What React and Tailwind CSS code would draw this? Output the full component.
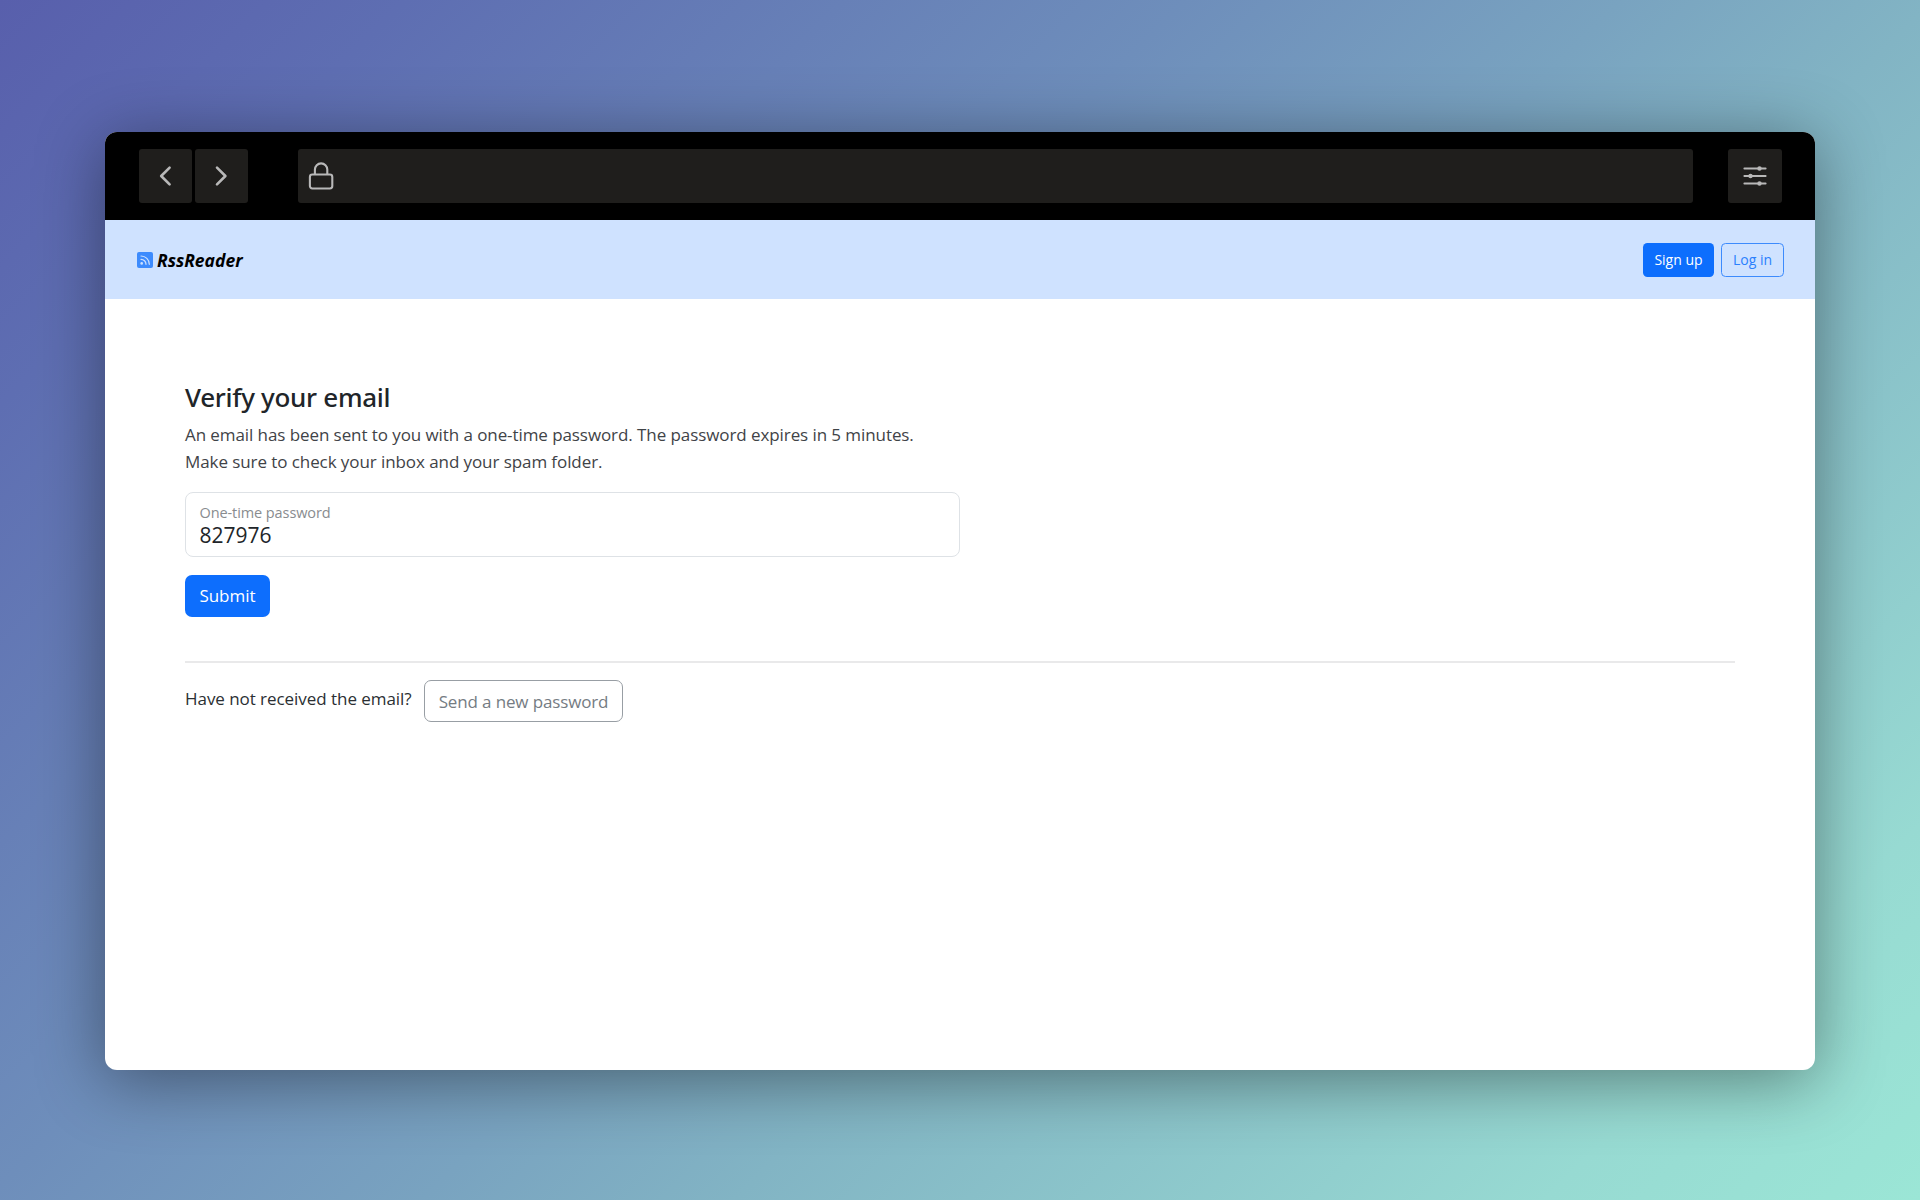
function ToolbarButton({ label, children }) {
  return (
    <button aria-label={label} className="flex h-[53.5px] w-[53.5px] items-center justify-center rounded-[3px] bg-[#1f1e1c] text-[#b8b8b8]">
      {children}
    </button>
  );
}

function Chevron({ d }) {
  return (
    <svg width="24" height="24" viewBox="0 0 24 24" fill="none" stroke="currentColor" strokeWidth="2.6" strokeLinecap="round" strokeLinejoin="round">
      <path d={d} />
    </svg>
  );
}

function LockIcon() {
  return (
    <svg width="26" height="28" viewBox="0 0 26 28" fill="none" stroke="#b8b8b8" strokeWidth="2.1">
      <rect x="1.9" y="12.5" width="22.4" height="14" rx="2.4" />
      <path d="M6.9 12.5V7.6a6.2 6.2 0 0 1 12.4 0v4.9" />
    </svg>
  );
}

function SlidersIcon() {
  return (
    <svg width="24" height="20" viewBox="0 0 24 20" fill="#b8b8b8" stroke="#b8b8b8" strokeWidth="2" strokeLinecap="round">
      <path d="M1.4 2.5h21.2M1.4 10h21.2M1.4 17.5h21.2" />
      <g stroke="none">
        <circle cx="16.5" cy="2.5" r="2.2" />
        <circle cx="7.5" cy="10" r="2.2" />
        <circle cx="16.5" cy="17.5" r="2.2" />
      </g>
    </svg>
  );
}

function RssIcon() {
  return (
    <svg width="16" height="16" viewBox="0 0 16 16" fill="none">
      <rect width="16" height="16" rx="2" fill="#3d8bfd" />
      <circle cx="4.7" cy="11.4" r="1.3" fill="#cfe2ff" />
      <path d="M4 7.3a5 5 0 0 1 5 5M4 4a8.3 8.3 0 0 1 8.3 8.3" stroke="#cfe2ff" strokeWidth="1.2" strokeLinecap="round" />
    </svg>
  );
}

function BrowserBar() {
  return (
    <div className="flex h-[88px] items-center bg-black px-[33.5px]">
      <div className="flex gap-[2.5px]">
        <ToolbarButton label="Back"><Chevron d="M16.6 3.6 8.2 12l8.4 8.4" /></ToolbarButton>
        <ToolbarButton label="Forward"><Chevron d="M8 3.6 16.4 12 8 20.4" /></ToolbarButton>
      </div>
      <div className="ml-[49.5px] mr-[35px] flex h-[53.5px] flex-1 items-center rounded-[3px] bg-[#1f1e1c] pl-[10.5px]">
        <LockIcon />
      </div>
      <ToolbarButton label="Settings"><SlidersIcon /></ToolbarButton>
    </div>
  );
}

function NavBar() {
  return (
    <header className="flex h-[79px] items-center justify-between bg-[#cfe2ff] pl-8 pr-[31px]">
      <a className="flex items-center gap-1">
        <RssIcon />
        <span className="text-[17.5px] font-bold italic leading-6 text-black">RssReader</span>
      </a>
      <div className="flex gap-[7px]">
        <button className="h-[34px] w-[71px] rounded-[4.5px] bg-[#0d6efd] text-[14px] text-white">Sign up</button>
        <button className="h-[34px] w-[63px] rounded-[4.5px] border border-[#3d8bfd] text-[14px] text-[#2b80fd]">Log in</button>
      </div>
    </header>
  );
}

export default function App() {
  return (
    <div className="flex h-[1200px] w-[1920px] flex-col items-center overflow-hidden bg-[linear-gradient(135deg,#585fac_0%,#5e6eb2_13%,#6e8ebb_38%,#79a3c0_52%,#82b4c4_62%,#97dad2_88%,#9be6d6_100%)] pt-[132px] font-['Open_Sans',sans-serif] text-[#212529]">
      <div className="flex h-[937.5px] w-[1710px] flex-col overflow-hidden rounded-[12px] bg-white shadow-[0_10px_68px_rgba(0,0,0,0.42)]">
        <BrowserBar />
        <NavBar />
        <main className="flex-1 px-20 pt-[82px]">
          <h1 className="font-['Noto_Sans',sans-serif] text-[26px] font-medium leading-8 tracking-[-0.3px]">Verify your email</h1>
          <p className="mt-[9px] text-[17px] leading-[26.7px] tracking-[-0.08px] text-[#3f4347]">
            An email has been sent to you with a one-time password. The password expires in 5 minutes.
            <br />
            Make sure to check your inbox and your spam folder.
          </p>
          <div className="mt-[17px] flex h-[65px] w-[775px] flex-col rounded-[8px] border border-[#dee2e6] pl-[13.5px] pt-[9px]">
            <span className="text-[14.5px] leading-[22px] tracking-[-0.09px] text-[#898c8f]">One-time password</span>
            <span className="text-[21px] leading-[23px]">827976</span>
          </div>
          <button className="mt-[18px] h-[42px] w-[85px] rounded-[7px] bg-[#0d6efd] pb-px text-[17px] text-white">Submit</button>
          <hr className="mt-11 border-t-2 border-[#e9e9ea]" />
          <div className="mt-[17px] flex items-start">
            <p className="w-[239px] text-[17px] leading-[38px] tracking-[-0.05px] text-[#2b2f33]">Have not received the email?</p>
            <button className="h-[42px] w-[199px] rounded-[7px] border border-[#989ea4] text-[17px] tracking-[-0.14px] text-[#757c83]">Send a new password</button>
          </div>
        </main>
      </div>
    </div>
  );
}
